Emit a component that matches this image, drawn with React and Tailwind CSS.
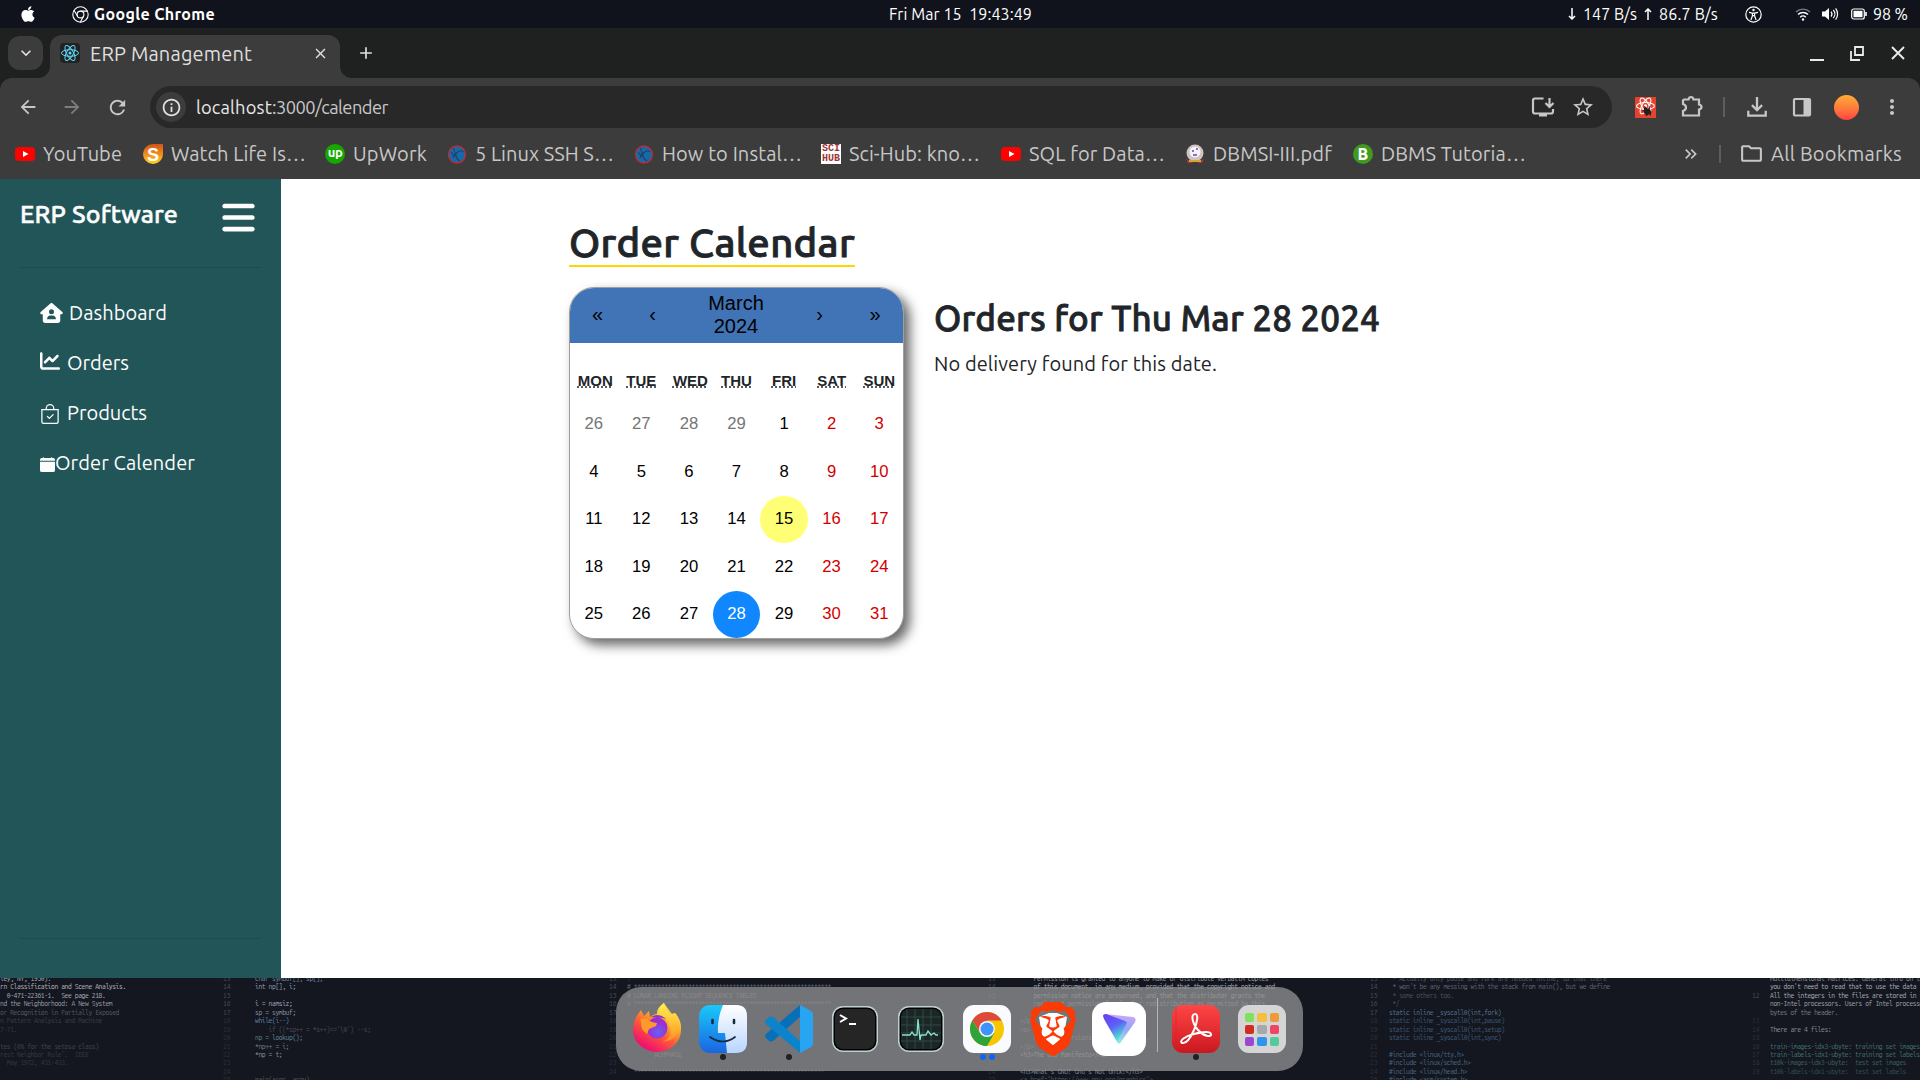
import React, { useLayoutEffect, useRef } from "react";
import { FaApple, FaHouseUser, FaChartLine, FaBars } from "react-icons/fa6";
import { BsBagCheck, BsCalendarFill } from "react-icons/bs";
import { SiBrave } from "react-icons/si";
import {
  MdArrowBack, MdArrowForward, MdRefresh, MdOutlineInfo, MdStarBorder,
  MdMoreVert, MdClose, MdAdd, MdKeyboardArrowDown, MdOutlineFolder,
  MdKeyboardDoubleArrowRight,
} from "react-icons/md";

// A single line of text whose letter spacing is adjusted so that it fills a given width.
function Fit({ w, className = "", children }) {
  const ref = useRef(null);
  useLayoutEffect(() => {
    const el = ref.current;
    el.style.letterSpacing = "0px";
    const natural = el.getBoundingClientRect().width;
    el.style.letterSpacing = `${(w - natural) / el.textContent.length}px`;
  }, [w, children]);
  return <span ref={ref} className={`inline-block whitespace-pre ${className}`}>{children}</span>;
}

function ChromeOutline() {
  return (
    <svg className="ml-[35px] size-[17px]" viewBox="0 0 17 17" fill="none" stroke="#fff" strokeWidth="1.1">
      <circle cx="8.5" cy="8.5" r="7.7" /><circle cx="8.5" cy="8.5" r="3.4" />
      <path d="M8.5 5.1h7M5.6 10.2 2 4.3M11.5 10.2 8.3 16.2" />
    </svg>
  );
}

function MenuBar() {
  return (
    <header className="grid h-7 grid-cols-3 items-center bg-[#10131b] text-[16px] text-white">
      <div className="flex items-center pl-[19px]">
        <FaApple className="size-[18px]" />
        <ChromeOutline />
        <Fit w={121} className="ml-[5px] font-bold">Google Chrome</Fit>
      </div>
      <div className="text-center"><Fit w={143} className="ml-px">{"Fri Mar 15  19:43:49"}</Fit></div>
      <div className="flex items-center justify-end pr-[12px]">
        <div className="flex w-[151px] items-center">
          <svg className="mr-[7px] h-3 w-2" viewBox="0 0 8 12" fill="none" stroke="#fff" strokeWidth="1.5"><path d="M4 0v11M1 8l3 3 3-3" /></svg>
          <Fit w={54}>147 B/s</Fit>
          <svg className="mx-[7px] h-3 w-2" viewBox="0 0 8 12" fill="none" stroke="#fff" strokeWidth="1.5"><path d="M4 12V1M1 4l3-3 3 3" /></svg>
          <Fit w={59}>86.7 B/s</Fit>
        </div>
        <svg className="ml-[26px] size-[17px]" viewBox="0 0 17 17" fill="none" stroke="#fff" strokeWidth="1.2">
          <circle cx="8.5" cy="8.5" r="7.7" /><circle cx="8.5" cy="4" r="1.2" fill="#fff" stroke="none" />
          <path d="M4 6.3l3.4.8h2.2l3.4-.8M7.4 7v3l-1.5 4M9.6 7v3l1.5 4M7.4 9.6h2.2" />
        </svg>
        <svg className="ml-[33px] h-[14px] w-4" viewBox="0 0 16 14" fill="none" strokeWidth="1.4" stroke="#fff">
          <path d="M1 5a10 10 0 0 1 14 0" stroke="#777b82" /><path d="M3 7.6a7 7 0 0 1 10 0" /><path d="M5.2 10.2a4 4 0 0 1 5.6 0" /><circle cx="8" cy="12.5" r="1.2" fill="#fff" stroke="none" />
        </svg>
        <svg className="ml-[11px] h-[14px] w-[17px]" viewBox="0 0 17 14" fill="none" stroke="#fff" strokeWidth="1.2">
          <path d="M0 4.5h3L7 1v12L3 9.5H0z" fill="#fff" stroke="none" /><path d="M9 4.5a4 4 0 0 1 0 5M11.3 3a6 6 0 0 1 0 8M13.6 1.4a9 9 0 0 1 0 11.2" />
        </svg>
        <svg className="ml-3 h-[12px] w-4" viewBox="0 0 16 12" fill="none" stroke="#fff" strokeWidth="1.2">
          <rect x=".7" y="1" width="12.6" height="10" rx="2" /><rect x="2.5" y="2.8" width="9" height="6.4" fill="#fff" stroke="none" /><path d="M15 4v4" strokeWidth="1.6" />
        </svg>
        <Fit w={35} className="ml-1.5">98 %</Fit>
      </div>
    </header>
  );
}

function ReactLogo({ color = "#61dafb" }) {
  return (
    <g fill="none" stroke={color} strokeWidth="1">
      <ellipse cx="10" cy="10" rx="8.5" ry="3.3" />
      <ellipse cx="10" cy="10" rx="8.5" ry="3.3" transform="rotate(60 10 10)" />
      <ellipse cx="10" cy="10" rx="8.5" ry="3.3" transform="rotate(120 10 10)" />
      <circle cx="10" cy="10" r="1.5" fill={color} stroke="none" />
    </g>
  );
}

function TabStrip() {
  return (
    <div className="flex h-[50px] bg-[#1f2120] text-[#dfdfdf]">
      <button className="mt-2 ml-2 grid h-[34px] w-[35px] place-items-center rounded-xl bg-[#3c3c3c]">
        <MdKeyboardArrowDown className="size-[20px]" />
      </button>
      <svg className="mt-auto -ml-[5px] size-3" viewBox="0 0 12 12"><path d="M12 0v12H0A12 12 0 0 0 12 0" fill="#3c3c3c" /></svg>
      <div className="mt-[7px] flex h-[43px] w-[290px] items-center rounded-t-xl bg-[#3c3c3c] pb-[7px]">
        <svg className="ml-2.5 size-5 rounded-sm bg-[#222]" viewBox="0 0 20 20"><ReactLogo /></svg>
        <Fit w={162} className="mt-px ml-[10px] text-[20px]">ERP Management</Fit>
        <MdClose className="ml-[60px] size-[17px]" />
      </div>
      <svg className="mt-auto size-3" viewBox="0 0 12 12"><path d="M0 0v12h12A12 12 0 0 1 0 0" fill="#3c3c3c" /></svg>
      <MdAdd className="mt-[15px] ml-1 size-[20px]" />
      <div className="mt-[17px] mr-[14px] ml-auto flex h-[18px] gap-[24px] text-[#e8eaed]">
        <svg className="size-4" viewBox="0 0 16 16" stroke="currentColor" strokeWidth="2"><path d="M0 15h14" /></svg>
        <svg className="size-4" viewBox="0 0 16 16" fill="none" stroke="currentColor" strokeWidth="1.8"><path d="M5 2h8v8H5zM1 6v9h9" /></svg>
        <svg className="size-4" viewBox="0 0 16 16" stroke="currentColor" strokeWidth="1.9"><path d="M2 2l12 12M14 2L2 14" /></svg>
      </div>
    </div>
  );
}

function Toolbar() {
  return (
    <div className="flex h-[58px] items-center rounded-t-xl bg-[#3c3c3c] text-[#c7c7c7]">
      <MdArrowBack className="ml-[17px] size-[22px]" />
      <MdArrowForward className="ml-[22px] size-[22px] text-[#7d7d7d]" />
      <MdRefresh className="ml-[23px] size-[23px]" />
      <div className="ml-[21px] flex h-[42px] w-[1462px] items-center rounded-full bg-[#282828] pl-1.5">
        <div className="grid size-[30px] place-items-center rounded-full bg-[#3c3c3c]"><MdOutlineInfo className="size-[21px] text-[#e3e3e3]" /></div>
        <div className="mt-px ml-2.5 flex text-[18.3px]">
          <Fit w={76} className="text-[#e8e8e8]">localhost</Fit>
          <Fit w={116} className="text-[#c7c7c7]">:3000/calender</Fit>
        </div>
        <svg className="mr-[16px] ml-auto size-6" viewBox="0 0 24 24" fill="none" stroke="currentColor" strokeWidth="2.2">
          <path d="M12.500 3.500H4Q2 3.500 2 5.500v11Q2 18.500 4 18.500h16q2 0 2-2V14M18.500 3v8M14.500 8l4 4 4-4" /><path d="M8 20h8" strokeWidth="3" />
        </svg>
        <MdStarBorder className="mr-[17px] size-6" />
      </div>
      <svg className="ml-[23px] h-[21px] w-[21px]" viewBox="0 0 20 20"><rect width="20" height="20" fill="#e5432f" /><g transform="translate(0 -1.5)"><ReactLogo color="#fff" /></g><path d="M8.500 9.500l6 2.500 1 4-5 1.500-2-3z" fill="#2b1d1d" /><path d="M7 13l9 1.500M14 9l-3 9M9 9l6 8.500" stroke="#2b1d1d" strokeWidth="1.2" /></svg>
      <svg className="ml-[24px] size-6" viewBox="0 0 24 24" fill="none" stroke="currentColor" strokeWidth="2.2">
        <path d="M4 4.500h4.500q.5-2.500 2.500-2.500t2.500 2.500H19V9.500q2.500.5 2.500 2.500T19 14.500V20.500H3V16q3-1 3-3.500T3 9V5.500z" />
      </svg>
      <div className="ml-[19px] h-5 w-0.5 bg-[#5d5d5d]" />
      <svg className="ml-[21px] size-[22px]" viewBox="0 0 24 24" fill="none" stroke="currentColor" strokeWidth="2.5"><path d="M12 1v14M6.500 10l5.500 5.500 5.500-5.500M2.500 16v5.500h19V16" /></svg>
      <svg className="ml-[24px] size-5" viewBox="0 0 20 20" fill="none" stroke="currentColor" strokeWidth="2.2"><rect x="2" y="2" width="16" height="16.5" rx="1" /><path d="M11.500 2H18v16h-6.500z" fill="currentColor" stroke="none" /></svg>
      <div className="ml-[22px] size-[25px] rounded-full bg-linear-to-b from-[#ffad33] to-[#ff3f3f]" />
      <MdMoreVert className="ml-[21px] size-6" />
    </div>
  );
}

const YouTube = () => <svg className="size-5 shrink-0" viewBox="0 0 20 20"><rect y="3" width="20" height="14" rx="4" fill="#f00" /><path d="M8 7l5.500 3L8 13z" fill="#fff" /></svg>;
const Globe = () => (
  <svg className="size-5 shrink-0" viewBox="0 0 20 20"><circle cx="10" cy="10.5" r="8.5" fill="#1769aa" stroke="#c32a31" strokeWidth="1.3" /><path d="M6 4q4 5 0 10M9 9q6-4 7-1M9 9q-1 5 4 8M4 8l3 4" stroke="#233e63" strokeWidth="1.1" fill="none" /></svg>
);
const StreamIcon = () => (
  <svg className="size-5 shrink-0" viewBox="0 0 20 20">
    <defs><linearGradient id="sg" x2="0" y2="1"><stop stopColor="#d2541a" /><stop offset=".5" stopColor="#f08b1d" /><stop offset="1" stopColor="#ffd520" /></linearGradient></defs>
    <path d="M10 0h10v10A10 10 0 1 1 10 0" fill="url(#sg)" /><text x="10" y="16.5" textAnchor="middle" fontFamily="Liberation Sans" fontWeight="bold" fontSize="18" fill="#fff">S</text>
  </svg>
);
const UpIcon = () => <span className="grid size-5 shrink-0 place-items-center rounded-full bg-[#14a800] pb-0.5 text-[13px] leading-none font-bold tracking-tight text-white">up</span>;
const SciIcon = () => (
  <span className="flex size-5 shrink-0 flex-col items-center justify-center bg-white font-['Liberation_Mono'] text-[10px] leading-[10px] font-bold text-[#a03434]"><span>SCI</span><span>HUB</span></span>
);
const CrestIcon = () => (
  <svg className="size-5 shrink-0" viewBox="0 0 20 20"><path d="M1 14q4 5 9 5t9-5l-2 5H3z" fill="#b2384b" /><circle cx="10" cy="9" r="8.5" fill="#cfc2bc" /><circle cx="10" cy="8" r="5.5" fill="#f6f0f8" /><path d="M7 6h2v2H7zM11 4h2v2h-2zM8 10h4v2H8z" fill="#8774c9" /><path d="M4 17h12" stroke="#d5a52f" strokeWidth="2" /></svg>
);
const BIcon = () => <span className="grid size-5 shrink-0 place-items-center rounded-full bg-[#3f9a1f] text-[16px] leading-none font-black text-white">B</span>;

const bookmarks = [
  [YouTube, "YouTube", 79, "w-[128px]"],
  [StreamIcon, "Watch Life Is…", 135, "w-[182px]"],
  [UpIcon, "UpWork", 74, "w-[122px]"],
  [Globe, "5 Linux SSH S…", 139, "w-[187px]"],
  [Globe, "How to Instal…", 140, "w-[187px]"],
  [SciIcon, "Sci-Hub: kno…", 131, "w-[180px]"],
  [YouTube, "SQL for Data…", 136, "w-[184px]"],
  [CrestIcon, "DBMSI-III.pdf", 119, "w-[168px]"],
  [BIcon, "DBMS Tutoria…", 145, "w-[180px]"],
];

function BookmarkBar() {
  return (
    <div className="flex h-[43px] items-center bg-[#3c3c3c] pb-[8px] pl-[15px] text-[20px] text-[#c7c7c7]">
      {bookmarks.map(([Icon, label, w, cell]) => (
        <div key={label} className={`flex shrink-0 items-center gap-2 ${cell}`}><Icon /><Fit w={w}>{label}</Fit></div>
      ))}
      <MdKeyboardDoubleArrowRight className="ml-auto size-5" />
      <div className="ml-[18px] h-[18px] w-0.5 bg-[#5d5d5d]" />
      <MdOutlineFolder className="ml-[18px] size-[25px]" />
      <Fit w={131} className="mr-[18px] ml-[7px]">All Bookmarks</Fit>
    </div>
  );
}

function Sidebar() {
  return (
    <aside className="flex w-[281px] shrink-0 flex-col bg-[#225558] px-5 text-[#fdfdfd]">
      <div className="flex h-[89px] items-start justify-between border-b border-[#1f4b4e] pr-[6px]">
        <Fit w={158} className="mt-[17px] text-[25px] leading-9 font-medium [-webkit-text-stroke:0.5px]">ERP Software</Fit>
        <FaBars className="mt-[20px] h-[37px] w-[33px]" />
      </div>
      <nav className="mt-[20px] flex flex-col pl-5 text-[20px]">
        <a className="flex h-[50px] items-center"><FaHouseUser className="mb-px h-5 w-[23px]" /><Fit w={98} className="mb-px ml-[6px]">Dashboard</Fit></a>
        <a className="flex h-[50px] items-center"><FaChartLine className="mb-1 size-5" /><Fit w={62} className="mb-px ml-[7px]">Orders</Fit></a>
        <a className="flex h-[50px] items-center"><BsBagCheck className="mt-0.5 size-5" /><Fit w={80} className="mb-px ml-[7px]">Products</Fit></a>
        <a className="flex h-[50px] items-center"><BsCalendarFill className="mt-0.5 size-[15px]" /><Fit w={140} className="mb-px">Order Calender</Fit></a>
      </nav>
      <div className="mt-auto mb-[39px] h-px bg-[#1f4b4e]" />
    </aside>
  );
}

const weekdays = ["MON", "TUE", "WED", "THU", "FRI", "SAT", "SUN"];
const days = [26, 27, 28, 29, ...Array.from({ length: 31 }, (_, i) => i + 1)];

function dayClass(day, i) {
  if (i < 4) return "text-[#757575]";
  if (day === 15) return "rounded-full bg-[#ffff76] text-black";
  if (day === 28) return "rounded-full bg-[#1087ff] text-white";
  return i % 7 > 4 ? "text-[#d10000]" : "text-black";
}

function Calendar() {
  return (
    <div className="h-[352px] w-[335px] overflow-hidden rounded-[25px] border border-[#a0a096] bg-white font-['Liberation_Sans',Arial,sans-serif] shadow-[6px_6px_12px_rgba(0,0,0,0.6)]">
      <div className="flex h-[55px] items-center bg-[#4174b6] pb-[2px] text-center text-[20px] leading-[23px] text-black">
        <span className="w-[55px]">«</span><span className="w-[55px]">‹</span>
        <span className="flex-1">March<br />2024</span>
        <span className="w-[55px]">›</span><span className="w-[56px]">»</span>
      </div>
      <div className="mt-[20px] grid h-[38px] grid-cols-7 items-center pb-[2px] text-center text-[15px] leading-[22px] font-bold text-[#212529]">
        {weekdays.map((d) => <abbr key={d} title={d} className={`underline decoration-dotted ${d === "MON" || d === "WED" ? "pl-[3px]" : ""}`}>{d}</abbr>)}
      </div>
      <div className="grid h-[237px] grid-cols-7 grid-rows-5 text-[16.67px]">
        {days.map((day, i) => <button key={i} className={dayClass(day, i)}>{day}</button>)}
      </div>
    </div>
  );
}

function Main() {
  return (
    <main className="flex-1 bg-white pt-[39px] pl-[288px] text-[#212529]">
      <div className="h-[49px] w-[286px] border-b-2 border-[#ffd700] text-[40px] leading-[50px] font-medium [-webkit-text-stroke:0.9px]"><Fit w={286}>Order Calendar</Fit></div>
      <div className="mt-5 flex gap-[30px]">
        <Calendar />
        <section className="pt-[10px]">
          <h2 className="text-[35px] leading-[43px] font-medium [-webkit-text-stroke:0.8px]"><Fit w={446}>Orders for Thu Mar 28 2024</Fit></h2>
          <p className="mt-[9px] text-[20px] leading-[30px]"><Fit w={283}>No delivery found for this date.</Fit></p>
        </section>
      </div>
    </main>
  );
}

const wall = [
  { w: "w-[223px]", nums: null, lines: [["ley, NY, 1950).", "text-[#a9adb5]"], ["rn Classification and Scene Analysis.", "text-[#b5b9c0]"], ["  0-471-22361-1.  See page 218.", "text-[#a9adb5]"], ["nd the Neighborhood: A New System", "text-[#989ca4]"], ["or Recognition in Partially Exposed", "text-[#555962]"], ["n Pattern Analysis and Machine", "text-[#3b3f48]"], ["7-71.", "text-[#363a43]"], ["", ""], ["tes (0% for the setosa class)", "text-[#40444d]"], ["rest Neighbor Rule\".  IEEE", "text-[#343841]"], ["  May 1972, 431-433.", "text-[#343841]"]] },
  { w: "w-[386px]", nums: 13, pad: "pl-[25px]", lines: [["char symbuf[], sp[];", "text-[#7086a5]"], ["int np[], i;", "text-[#8da0b9]"], ["", ""], ["i = namsiz;", "text-[#a0a9b8]"], ["sp = symbuf;", "text-[#8592a7]"], ["while(i--)", "text-[#5f82a9]"], ["    if ((*sp++ = *s++)=='\\0') --s;", "text-[#444b57]"], ["np = lookup();", "text-[#5d8394]"], ["*np++ = i;", "text-[#737c8b]"], ["*np = t;", "text-[#8b929e]"], ["", ""], ["", ""], ["main(argc, argv)", "text-[#50545e]"]] },
  { w: "w-[379px]", nums: 13, pad: "pl-[11px]", lines: [["|", "text-[#343841]"], ["# **********************************************************", "text-[#5d6169]"], ["# LUNAR LANDING FLIGHT SEQUENCE TABLES", "text-[#777b83]"], ["# **********************************************************", "text-[#5d6169]"], ["", ""], ["", ""], ["", ""], ["", ""], ["", ""], ["        WCHPHASE", "text-[#777]"], ["", ""], ["  ********************************************************", "text-[#41454e]"]] },
  { w: "w-[382px]", nums: 13, pad: "pl-[25px]", lines: [["    Permission is granted to anyone to make or distribute verbatim copies", "text-[#969aa2]"], ["    of this document, in any medium, provided that the copyright notice and", "text-[#a9adb5]"], ["    permission notice are preserved, and that the distributor grants the", "text-[#a9adb5]"], ["    recipient permission for further redistribution as permitted by this", "text-[#9599a1]"], ["    notice.", "text-[#555]"], ["</p>", "text-[#777]"], ["<p>", "text-[#777]"], ["    Modified versions may not be made.", "text-[#888]"], ["</p>", "text-[#777]"], ["<h3>The GNU Manifesto</h3>", "text-[#a3a7af]"], ["", ""], ["<h3>What's GNU? Gnu's Not Unix!</h3>", "text-[#7b8795]"], ["<a href=\"https://www.gnu.org/graphics\">", "text-[#485766]"]] },
  { w: "w-[382px]", nums: 13, pad: "pl-[12px]", lines: [[" * Actually only pause and fork are needed inline, so that there", "text-[#555962]"], [" * won't be any messing with the stack from main(), but we define", "text-[#61656e]"], [" * some others too.", "text-[#4c5059]"], [" */", "text-[#4c5059]"], ["static inline _syscall0(int,fork)", "text-[#547392]"], ["static inline _syscall0(int,pause)", "text-[#3e5877]"], ["static inline _syscall0(int,setup)", "text-[#405a77]"], ["static inline _syscall0(int,sync)", "text-[#405a77]"], ["", ""], ["#include <linux/tty.h>", "text-[#496784]"], ["#include <linux/sched.h>", "text-[#496784]"], ["#include <linux/head.h>", "text-[#496784]"], ["#include <asm/system.h>", "text-[#496784]"]] },
  { w: "w-[168px]", nums: 10, pad: "pl-[11px]", lines: [["multidimensional matrices. General info on the", "text-[#8e929a]"], ["you don't need to read that to use the data files.", "text-[#a9adb5]"], ["All the integers in the files are stored in the", "text-[#a9adb5]"], ["non-Intel processors. Users of Intel processors", "text-[#9da1a9]"], ["bytes of the header.", "text-[#777b83]"], ["", ""], ["There are 4 files:", "text-[#8b8f97]"], ["", ""], ["train-images-idx3-ubyte: training set images", "text-[#417070]"], ["train-labels-idx1-ubyte: training set labels", "text-[#417070]"], ["t10k-images-idx3-ubyte:  test set images", "text-[#396060]"], ["t10k-labels-idx1-ubyte:  test set labels", "text-[#315052]"]] },
];

// Line numbers of the last column skip wrapped lines.
const wrappedNumbers = ["", "", "12", "", "", "13", "14", "15", "16", "17", "18", "19"];

function Wallpaper() {
  return (
    <div className="flex h-[102px] overflow-hidden bg-[#141720] font-['Ubuntu_Mono','Liberation_Mono',monospace] text-[6.8px] leading-[8.45px]">
      {wall.map((col, c) => (
        <div key={c} className={`-mt-[3px] flex shrink-0 overflow-hidden whitespace-pre ${col.w}`}>
          {col.nums && (
            <div className="w-[7px] text-[#4a4e57]">
              {col.lines.map((_, i) => <div key={i} className={`h-[8.45px] ${i > 4 ? "opacity-50" : ""}`}>{col.nums === 10 ? wrappedNumbers[i] : col.nums + i}</div>)}
            </div>
          )}
          <div className={col.pad || ""}>{col.lines.map(([t, cl], i) => <div key={i} className={`h-[8.45px] ${cl}`}><Fit w={t.length * 3.4}>{t}</Fit></div>)}</div>
        </div>
      ))}
    </div>
  );
}

const Firefox = () => (
  <svg className="mb-1 h-[50px] w-12" viewBox="0 0 48 50">
    <defs>
      <linearGradient id="ff" x1=".85" y1=".05" x2=".25" y2="1"><stop stopColor="#fff44f" /><stop offset=".35" stopColor="#ffa626" /><stop offset=".6" stopColor="#ff563b" /><stop offset=".9" stopColor="#f0156b" /></linearGradient>
      <radialGradient id="fp" cx=".55" cy=".7"><stop stopColor="#6a5df5" /><stop offset="1" stopColor="#9b2fd0" /></radialGradient>
      <linearGradient id="fy" x2="0" y2="1"><stop stopColor="#fff44f" /><stop offset="1" stopColor="#ff9426" /></linearGradient>
    </defs>
    <path d="M3 15l5-7 3 6 5-5 1 6q6-4 9-3Q24 6 31 1q1 6 7 11l4-1q7 8 6 17a24 22 0 0 1-48 0Q0 21 3 15" fill="url(#ff)" />
    <path d="M31 1q-8 5-7 12 10 1 12 10 5 12-7 17 17-2 18-17 0-7-5-12l1 6Q38 11 31 1" fill="url(#fy)" opacity=".85" />
    <circle cx="24" cy="26" r="10.5" fill="url(#fp)" />
    <path d="M7 17q6-2 10 2 3 2 7 2l-1 3-7 3-2 5Q7 27 8 20" fill="#ff9a28" />
    <path d="M18 15q8-5 15 2-5-2-9-1z" fill="#8c38c7" />
  </svg>
);
const Finder = () => (
  <svg className="size-12" viewBox="0 0 48 48">
    <defs><linearGradient id="fa" x2="0" y2="1"><stop stopColor="#19c9fb" /><stop offset="1" stopColor="#1a65e0" /></linearGradient><linearGradient id="fb" x2="0" y2="1"><stop stopColor="#fff" /><stop offset="1" stopColor="#b8d6ff" /></linearGradient></defs>
    <rect width="48" height="48" rx="11" fill="url(#fa)" /><path d="M24 0h13q11 0 11 11v26q0 11-11 11h-9q-1-9-2-20h-7Q18 14 24 0" fill="url(#fb)" />
    <path d="M13.500 15v3M35 15v3" stroke="#16293f" strokeWidth="2.6" strokeLinecap="round" /><path d="M11 32q13 9 25 0" fill="none" stroke="#16293f" strokeWidth="1.7" strokeLinecap="round" />
  </svg>
);
const VSCode = () => (
  <svg className="size-12" viewBox="0 0 48 48">
    <path d="M35 0v12L8 36q-2 1-4 0l-3-3q-2-2 0-4z" fill="#0870b8" /><path d="M1 19q-2-2 0-4l3-3q2-1 4 0l27 24v12z" fill="#0b84cc" /><path d="M35 0l11 6q2 1 2 3v30q0 2-2 3l-11 6z" fill="#27a5f3" />
  </svg>
);
const Terminal = () => <svg className="size-12" viewBox="0 0 48 48"><rect x="1" y="1" width="46" height="46" rx="11" fill="#bfd0d2" /><rect x="2.5" y="2.5" width="43" height="43" rx="9.5" fill="#000" /><rect x="4" y="4" width="40" height="40" rx="8" fill="#252525" /><path d="M9 10l6 3.500L9 17" fill="none" stroke="#fff" strokeWidth="2" /><path d="M18 19h7" stroke="#fff" strokeWidth="2" /></svg>;
const Monitor = () => (
  <svg className="size-12" viewBox="0 0 48 48"><rect x="1" y="1" width="46" height="46" rx="11" fill="#bfd0d2" /><rect x="2.5" y="2.5" width="43" height="43" rx="9.5" fill="#000" /><rect x="4" y="4" width="40" height="40" rx="8" fill="#1b2725" />
    <path d="M10 4v40M18 4v40M26 4v40M34 4v40M4 12h40M4 20h40M4 28h40M4 36h40" stroke="#34514b" strokeWidth=".8" /><path d="M5 30h8l2-3 2 3h3l1-16 2 21 1-5h5l2-4 3 4 3-2 2 2h2" fill="none" stroke="#8ce0d2" strokeWidth="1.3" /></svg>
);
const Chrome = () => (
  <svg className="size-12" viewBox="0 0 48 48"><rect width="48" height="48" rx="11" fill="#fafbff" />
    <circle cx="24" cy="24" r="17" fill="#f7c600" /><path d="M9.300 15.500a17 17 0 0 1 29.400 0H24l-7 12z" fill="#dd4a3b" /><path d="M9.300 15.500A17 17 0 0 0 24 41l7.400-13H17z" fill="#2ea33b" /><circle cx="24" cy="24" r="8" fill="#f4f6fa" /><circle cx="24" cy="24" r="6.5" fill="#3f92f7" /></svg>
);
const Brave = () => (
  <span className="relative grid h-[54px] w-[54px] place-items-center">
    <svg className="absolute h-10 w-8" viewBox="0 0 32 40"><path d="M2 8l10-4h8l10 4-3 18-11 12L5 26z" fill="#fff" /></svg>
    <SiBrave className="relative size-[54px] text-[#fb3a05]" />
  </span>
);
const Proton = () => (
  <svg className="size-[54px]" viewBox="0 0 54 54"><defs><linearGradient id="pv" x2=".5" y2="1"><stop stopColor="#6a3cf5" /><stop offset=".55" stopColor="#5b62f6" /><stop offset="1" stopColor="#4fe3d8" /></linearGradient><linearGradient id="pw" x2="0" y2="1"><stop stopColor="#c9a9fb" /><stop offset=".5" stopColor="#9aa3f7" /><stop offset="1" stopColor="#8ff0e0" /></linearGradient></defs>
    <rect width="54" height="54" rx="14" fill="#fff" /><path d="M13 12l28 3q4 1 2 5L29 40q-2 3-4 0z" fill="url(#pw)" /><path d="M11 14q0-2 3-2l19 7q3 1 1 4L26 38q-1 1-2 0L12 17z" fill="url(#pv)" /></svg>
);
const Acrobat = () => (
  <svg className="size-12" viewBox="0 0 48 48"><defs><linearGradient id="ac" x2="0" y2="1"><stop stopColor="#ff4545" /><stop offset="1" stopColor="#ca1820" /></linearGradient></defs><rect width="48" height="48" rx="11" fill="url(#ac)" /><path d="M4 3v42" stroke="#c9272d" strokeWidth="1" opacity=".5" />
    <path d="M23 9c4 0 2 9-1 16-4 9-8 14-12 13-3-2 3-7 12-9 8-2 16-3 17 0 1 4-8 2-13-4-5-5-8-16-3-16z" fill="none" stroke="#fff" strokeWidth="2" /></svg>
);
const tiles = ["bg-[#7fe25c]", "bg-[#f2c03c]", "bg-[#ed9a3a]", "bg-[#cf2d22]", "bg-[#a5a9ab]", "bg-[#ed4566]", "bg-[#9a48d0]", "bg-[#2e95ec]", "bg-[#55c99c]"];
const Launcher = () => <span className="grid size-12 grid-cols-3 content-center justify-center gap-[3px] rounded-[11px] bg-[#d5d5d5] px-[7px]">{tiles.map((c) => <span key={c} className={`h-[9px] rounded-xs ${c}`} />)}</span>;

function DockItem({ icon: Icon, dots = 0, color = "bg-[#202020]" }) {
  return (
    <div className="relative grid h-[54px] w-[66px] place-items-center">
      <Icon />
      <div className="absolute inset-x-0 -bottom-[4px] flex justify-center gap-[3px]">
        {Array.from({ length: dots }, (_, i) => <span key={i} className={`size-[6px] rounded-full ${color}`} />)}
      </div>
    </div>
  );
}

function Dock() {
  return (
    <div className="absolute bottom-[9px] left-[616px] flex h-[84px] w-[687px] items-center rounded-[25px] bg-[#8e8e90]/78 pl-[8px]">
      <DockItem icon={Firefox} />
      <DockItem icon={Finder} dots={1} />
      <DockItem icon={VSCode} dots={1} />
      <DockItem icon={Terminal} />
      <DockItem icon={Monitor} />
      <DockItem icon={Chrome} dots={2} color="bg-[#1463f0]" />
      <DockItem icon={Brave} />
      <DockItem icon={Proton} />
      <div className="mr-[5px] mb-2 ml-[5px] h-[54px] w-px bg-[#b5b5b5]" />
      <DockItem icon={Acrobat} dots={1} />
      <DockItem icon={Launcher} />
    </div>
  );
}

export default function App() {
  return (
    <div className="relative flex h-[1080px] w-[1920px] flex-col overflow-hidden bg-[#1f2120] font-['Ubuntu','Noto_Sans',sans-serif] leading-none">
      <MenuBar />
      <TabStrip />
      <Toolbar />
      <BookmarkBar />
      <div className="flex h-[799px]"><Sidebar /><Main /></div>
      <Wallpaper />
      <Dock />
    </div>
  );
}
